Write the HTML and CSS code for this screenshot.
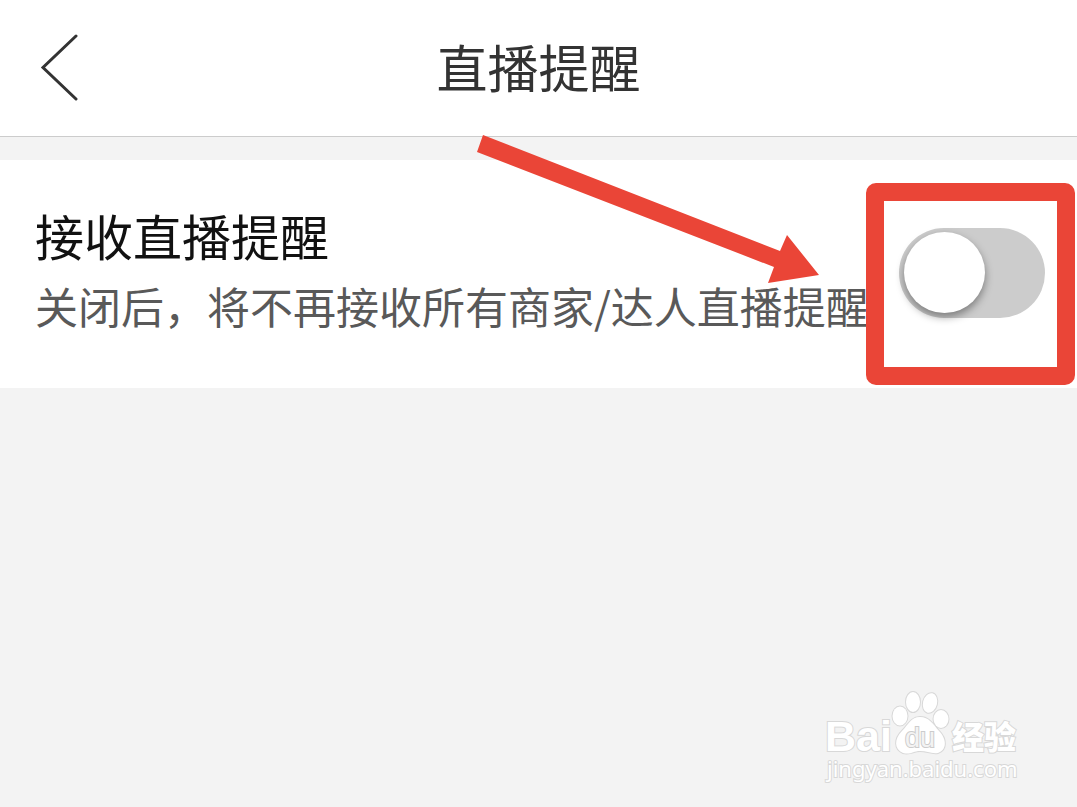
FILE: index.html
```html
<!DOCTYPE html>
<html lang="zh-CN">
<head>
  <meta charset="UTF-8">
  <meta name="viewport" content="width=device-width, initial-scale=1.0">
  <title>直播提醒</title>
  <link rel="stylesheet" href="styles.css">
</head>
<body>

  <header class="header">
    <button type="button" class="back-button" aria-label="返回">
      <svg width="40" height="68" viewBox="0 0 40 68" fill="none" stroke="#333" stroke-width="3" stroke-linecap="round">
        <path d="M36 2L3 33.500L36 65" />
      </svg>
    </button>
    <h1>直播提醒</h1>
  </header>

  <main>
    <div class="setting">
      <label class="setting-text" for="liveRemind">
        <span class="setting-name">接收直播提醒</span>
        <span class="setting-desc">关闭后，将不再接收所有商家/达人直播提醒</span>
      </label>
      <div class="switch-wrap">
        <input type="checkbox" class="switch" id="liveRemind">
        <div class="mark-box"></div>
        <svg class="mark-arrow" width="344" height="150" viewBox="0 0 344 150" fill="#ea4537">
          <path d="M7 1L304 117L311 101L343 141L292 149L298 133L1 18Z" />
        </svg>
      </div>
    </div>
  </main>

  <svg class="watermark" width="200" height="96" viewBox="0 0 200 96">
    <text class="wm-brand" x="4" y="60">Bai</text>
    <g class="wm-paw">
      <ellipse cx="79" cy="25" rx="7.500" ry="9.500" />
      <ellipse cx="92" cy="11" rx="7" ry="10" />
      <ellipse cx="109" cy="12" rx="7" ry="10" transform="rotate(14 109 12)" />
      <ellipse cx="120" cy="28" rx="7.500" ry="9" />
      <path d="M99 26C108 26 112 33 118 40C126 48 126 59 117 62C110 63 106 60 99 60C92 60 90 64 82 62C73 58 73 48 81 40C87 34 90 26 99 26Z" />
    </g>
    <text class="wm-du" x="84" y="56">du</text>
    <text class="wm-cn" x="131" y="58">经验</text>
    <text class="wm-url" x="6" y="86">jingyan.baidu.com</text>
  </svg>

</body>
</html>
```
FILE: styles.css
```css
* {
  box-sizing: border-box;
}

body {
  margin: 0;
  min-height: 100vh;
  position: relative;
  overflow-x: hidden;
  background: #f3f3f3;
  font-family: "Noto Sans CJK SC", sans-serif;
}

.header {
  display: grid;
  grid-template-columns: 1fr auto 1fr;
  align-items: center;
  padding: 32px 40px;
  background: #fff;
  border-bottom: 1px solid #ccc;
}

.header h1 {
  margin: 0;
  padding-bottom: 4px;
  font-size: 51px;
  font-weight: 400;
  line-height: 68px;
  color: #333;
}

.back-button {
  justify-self: start;
  display: flex;
  padding: 0;
  border: none;
  background: none;
  cursor: pointer;
}

.setting {
  display: flex;
  align-items: center;
  justify-content: space-between;
  gap: 24px;
  margin-top: 23px;
  padding: 40px 32px 42px 35px;
  background: #fff;
}

.setting-text {
  padding-bottom: 6px;
}

.setting-name,
.setting-desc {
  display: block;
  line-height: 70px;
}

.setting-name {
  font-size: 49px;
  color: #111;
}

.setting-desc {
  font-size: 43px;
  color: #595959;
}

.switch-wrap {
  position: relative;
  display: flex;
  flex-shrink: 0;
}

.switch {
  appearance: none;
  width: 146px;
  height: 90px;
  margin: 0;
  padding: 4px 5px;
  border-radius: 45px;
  background: #ccc;
  cursor: pointer;
}

.switch::before {
  content: "";
  display: block;
  width: 81px;
  height: 81px;
  border-radius: 50%;
  background: #fff;
  box-shadow: 0 4px 8px rgba(0, 0, 0, 0.4);
}

.switch:checked {
  background: #ea4537;
}

.switch:checked::before {
  margin-left: auto;
}

/* red highlight around the switch */
.mark-box {
  position: absolute;
  top: -45px;
  right: -30px;
  bottom: -67px;
  left: -33px;
  border: 18px solid #ea4537;
  border-radius: 10px;
  pointer-events: none;
}

.mark-arrow {
  position: absolute;
  right: 225px;
  bottom: 34px;
  pointer-events: none;
}

.watermark {
  position: absolute;
  right: 56px;
  bottom: 20px;
  overflow: visible;
  fill: #fff;
  stroke: #d8d8d8;
  stroke-width: 2px;
  paint-order: stroke;
}

.wm-brand {
  font: bold 43px "Liberation Sans", sans-serif;
}

.wm-du {
  font: 27px "Liberation Sans", sans-serif;
  fill: #f3f3f3;
  stroke: #ccc;
}

.wm-cn {
  font: 900 32px "Noto Sans CJK SC", sans-serif;
}

.wm-url {
  font: 22px "Noto Sans", sans-serif;
}
```
